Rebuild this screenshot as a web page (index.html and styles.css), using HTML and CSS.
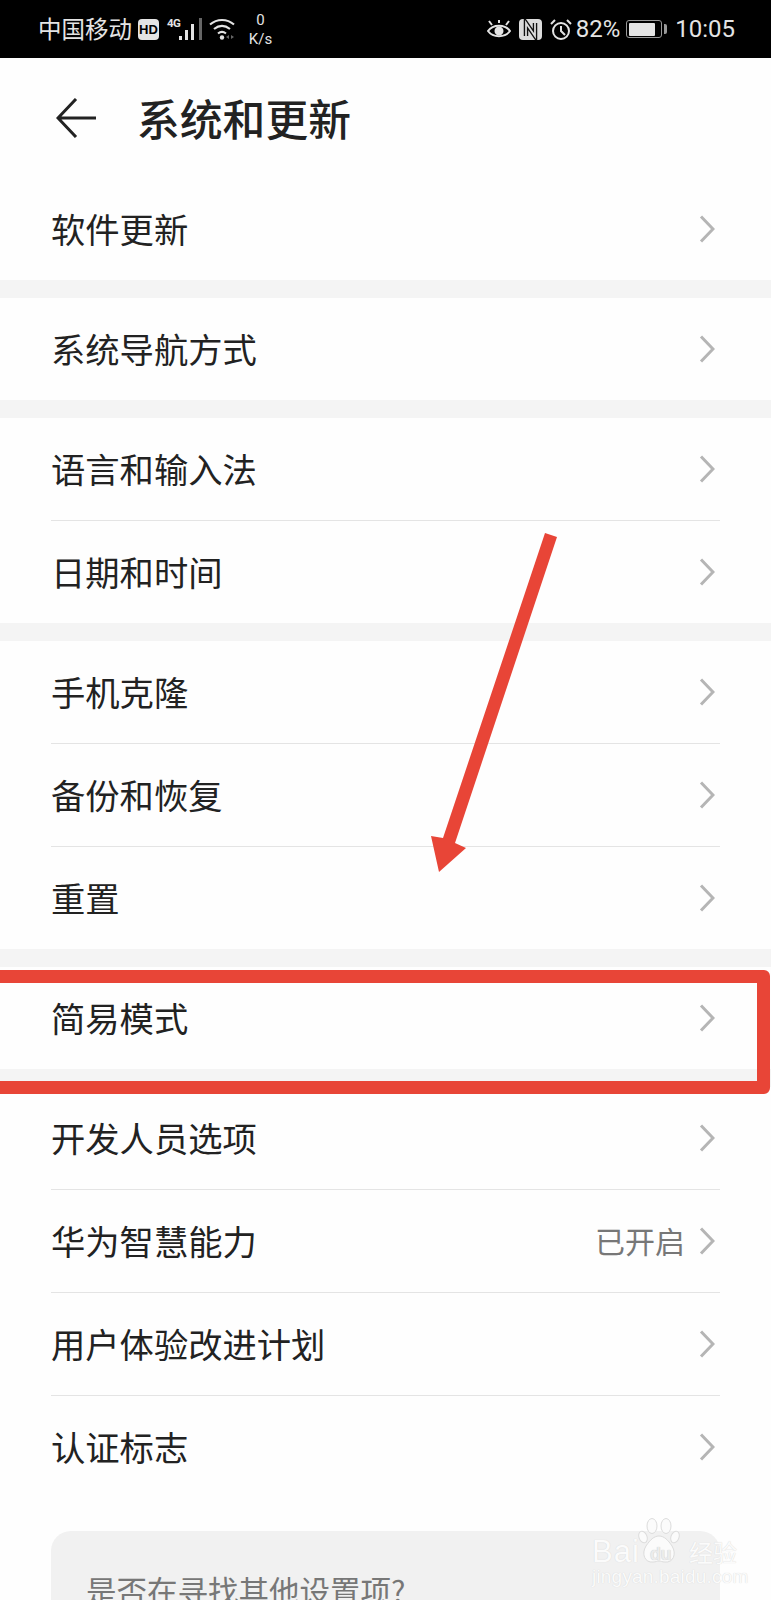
FILE: index.html
```html
<!DOCTYPE html>
<html lang="zh-CN">
<head>
<meta charset="utf-8">
<title>系统和更新</title>
<link rel="stylesheet" href="styles.css">
</head>
<body>
<div class="page">
  <div class="statusbar">
    <div class="status-left">
      <span class="carrier">中国移动</span>
      <span class="hd">HD</span>
      <span class="signal">
        <span class="net">4G</span>
        <svg width="24" height="22" viewBox="0 0 24 22"><g fill="#e4e4e4"><rect x="0" y="18" width="3" height="4"/><rect x="6" y="12" width="3" height="10"/><rect x="12" y="6" width="3" height="16"/></g><rect x="20" y="0" width="3" height="22" fill="#666"/></svg>
      </span>
      <svg class="wifi" width="26" height="22" viewBox="0 0 26 22" fill="none" stroke="#e4e4e4" stroke-width="2.200"><path d="M1 6.500C8 .5 18 .5 25 6.500"/><path d="M5 11c5-4 11-4 16 0"/><path d="M9 15.500c2.500-2 5.500-2 8 0"/><circle cx="13" cy="19.500" r="2.200" fill="#e4e4e4" stroke="none"/><path d="M20 17v4l-3-2zM22 17v4l3-2z" fill="#666" stroke="none"/></svg>
      <span class="speed"><span>0</span><span>K/s</span></span>
    </div>
    <div class="status-right">
      <svg width="24" height="18" viewBox="0 0 24 18" fill="none" stroke="#e4e4e4" stroke-width="2"><path d="M1 11c5-7 17-7 22 0-5 7-17 7-22 0z"/><circle cx="12" cy="11" r="3.500" fill="#e4e4e4"/><path d="M5 5 2 1M12 3V0M19 5l3-4"/></svg>
      <svg width="23" height="21" viewBox="0 0 23 21"><rect width="23" height="21" rx="4" fill="#dcdcdc"/><path d="M7 17V4l9 13V4" fill="none" stroke="#111" stroke-width="4.500"/><path d="M7 17V4l9 13V4" fill="none" stroke="#dcdcdc" stroke-width="1.800"/></svg>
      <svg width="22" height="21" viewBox="0 0 22 21" fill="none" stroke="#e4e4e4" stroke-width="2"><circle cx="11" cy="12" r="8"/><path d="M11 7v5l4 4M1 5l4-4M21 5l-4-4"/></svg>
      <span class="pct">82%</span>
      <span class="battery"><span class="battery-fill"></span></span>
      <span class="nub"></span>
      <span class="clock">10:05</span>
    </div>
  </div>

  <header class="titlebar">
    <svg class="back" width="40" height="40" viewBox="0 0 40 40" fill="none" stroke="#222" stroke-width="3"><path d="M20 1 2 20l18 19M2 20h38"/></svg>
    <h1 class="title">系统和更新</h1>
  </header>

  <section class="group">
    <div class="row"><span class="label">软件更新</span><svg class="chev" width="16" height="28" viewBox="0 0 16 28"><path d="M2 1.500 14 14 2 26.500"/></svg></div>
  </section>
  <section class="group">
    <div class="row"><span class="label">系统导航方式</span><svg class="chev" width="16" height="28" viewBox="0 0 16 28"><path d="M2 1.500 14 14 2 26.500"/></svg></div>
  </section>
  <section class="group">
    <div class="row"><span class="label">语言和输入法</span><svg class="chev" width="16" height="28" viewBox="0 0 16 28"><path d="M2 1.500 14 14 2 26.500"/></svg></div>
    <div class="row"><span class="label">日期和时间</span><svg class="chev" width="16" height="28" viewBox="0 0 16 28"><path d="M2 1.500 14 14 2 26.500"/></svg></div>
  </section>
  <section class="group">
    <div class="row"><span class="label">手机克隆</span><svg class="chev" width="16" height="28" viewBox="0 0 16 28"><path d="M2 1.500 14 14 2 26.500"/></svg></div>
    <div class="row"><span class="label">备份和恢复</span><svg class="chev" width="16" height="28" viewBox="0 0 16 28"><path d="M2 1.500 14 14 2 26.500"/></svg></div>
    <div class="row"><span class="label">重置</span><svg class="chev" width="16" height="28" viewBox="0 0 16 28"><path d="M2 1.500 14 14 2 26.500"/></svg></div>
  </section>
  <section class="group">
    <div class="row"><span class="label">简易模式</span><svg class="chev" width="16" height="28" viewBox="0 0 16 28"><path d="M2 1.500 14 14 2 26.500"/></svg></div>
  </section>
  <section class="group">
    <div class="row"><span class="label">开发人员选项</span><svg class="chev" width="16" height="28" viewBox="0 0 16 28"><path d="M2 1.500 14 14 2 26.500"/></svg></div>
    <div class="row"><span class="label">华为智慧能力</span><span class="value">已开启</span><svg class="chev" width="16" height="28" viewBox="0 0 16 28"><path d="M2 1.500 14 14 2 26.500"/></svg></div>
    <div class="row"><span class="label">用户体验改进计划</span><svg class="chev" width="16" height="28" viewBox="0 0 16 28"><path d="M2 1.500 14 14 2 26.500"/></svg></div>
    <div class="row"><span class="label">认证标志</span><svg class="chev" width="16" height="28" viewBox="0 0 16 28"><path d="M2 1.500 14 14 2 26.500"/></svg></div>
  </section>

  <aside class="hint">是否在寻找其他设置项?</aside>

  <div class="redbox"></div>
  <svg class="arrow" width="140" height="350" viewBox="425 530 140 350"><path fill="#e84537" d="M545 533 557 537 455 843 466 848 439 872 431 836 443 838z"/></svg>

  <div class="watermark">
    <svg class="paw" width="42" height="46" viewBox="0 0 42 46" fill="#fbfbfb" stroke="#dcdcdc" stroke-width="1"><ellipse cx="5" cy="19" rx="4" ry="6" transform="rotate(-20 5 19)"/><ellipse cx="14" cy="8" rx="5" ry="7.500"/><ellipse cx="28" cy="8" rx="5" ry="7.500"/><ellipse cx="37" cy="19" rx="4" ry="6" transform="rotate(20 37 19)"/><path d="M21 18c5 0 9 4 13 10 5 8 1 17-7 16-3 0-4-1-6-1s-3 1-6 1c-8 1-12-8-7-16 4-6 8-10 13-10z"/></svg>
    <span class="wm-du">du</span>
    <div class="wm-main"><span class="wm-bai">Bai</span><span class="wm-cn">经验</span></div>
    <div class="wm-url">jingyan.baidu.com</div>
  </div>
</div>
</body>
</html>
```

FILE: styles.css
```css
* { box-sizing: border-box; }
html, body { margin: 0; padding: 0; background: #fff; }
body { font-family: "Noto Sans CJK SC", "Noto Sans", sans-serif; }
.page { position: relative; width: 771px; height: 1600px; overflow: hidden; background: #fefefe; }

.statusbar { height: 58px; background: #000; color: #e4e4e4; display: flex; justify-content: space-between; align-items: center; padding: 0 36px 0 38px; }
.status-left, .status-right { display: flex; align-items: center; }
.carrier { font-size: 23.500px; line-height: 1; }
.hd { margin-left: 6px; width: 21px; height: 21px; border-radius: 4px; background: #e4e4e4; color: #000; font: 700 13px/21px "Liberation Sans", sans-serif; text-align: center; }
.signal { position: relative; display: flex; margin-left: 8px; padding-left: 12px; height: 22px; }
.net { position: absolute; left: 0; top: 0; font: 700 11.500px/11px "Roboto", sans-serif; letter-spacing: -.5px; }
.wifi { margin-left: 6px; }
.speed { display: flex; flex-direction: column; align-items: center; margin-left: 13px; width: 25px; font: 15px/19px "Roboto", sans-serif; margin-top: 2px; }
.status-right svg + svg { margin-left: 8px; }
.pct { margin-left: 4px; font: 24px/1 "Roboto", sans-serif; }
.battery { margin-left: 6px; width: 36px; height: 18px; border: 1.500px solid #999; border-radius: 3px; padding: 1.500px; }
.battery-fill { display: block; height: 100%; width: 86%; background: #e4e4e4; border-radius: 1px; }
.nub { margin-left: 2px; width: 3px; height: 10px; background: #999; border-radius: 0 2px 2px 0; }
.clock { margin-left: 8px; font: 24px/1 "Roboto", sans-serif; }

.titlebar { height: 120px; display: flex; align-items: center; padding-left: 56px; }
.back { flex: none; }
.title { margin: 0 0 2px 41px; font-size: 42.800px; line-height: 1; font-weight: 500; color: #222; }

.group { padding: 0 51px; background: #fefefe; }
.group + .group { border-top: 18px solid #f4f4f4; }
.row { height: 102px; display: flex; align-items: center; }
.row + .row { height: 103px; border-top: 1px solid #e4e4e4; }
.label { flex: 1; font-size: 34.300px; line-height: 34px; padding-bottom: 2px; color: #222; }
.value { font-size: 30px; line-height: 30px; padding-bottom: 2px; color: #777; margin-right: 14px; }
.chev { flex: none; margin-right: 5px; fill: none; stroke: #b5b5b5; stroke-width: 3; }

.hint { margin: 33px 51px 0; height: 120px; padding: 41px 35px 0; background: #f1f1f1; border-radius: 20px; font-size: 30.500px; line-height: 36px; color: #777; }

.redbox { position: absolute; left: -20px; top: 970px; width: 790px; height: 124px; border: 13px solid #e84537; border-radius: 6px; }
.arrow { position: absolute; left: 425px; top: 530px; }

.watermark { position: absolute; left: 592px; top: 1518px; width: 140px; height: 68px; color: #fbfbfb; text-shadow: 0 0 1px #cfcfcf; }
.paw { position: absolute; left: 46px; top: 0; }
.wm-du { position: absolute; left: 58px; top: 26px; font: 700 18px/20px "Liberation Sans", sans-serif; letter-spacing: -.5px; color: #ececec; text-shadow: 0 0 1px #bbb; }
.wm-main { display: flex; justify-content: space-between; align-items: center; padding-top: 19px; height: 49px; }
.wm-bai { font: 400 31px/30px "Liberation Sans", sans-serif; letter-spacing: 1px; }
.wm-cn { font-size: 24px; line-height: 30px; margin-right: -5px; }
.wm-url { font: 19px/20px "Liberation Sans", sans-serif; white-space: nowrap; letter-spacing: .2px; }
```
